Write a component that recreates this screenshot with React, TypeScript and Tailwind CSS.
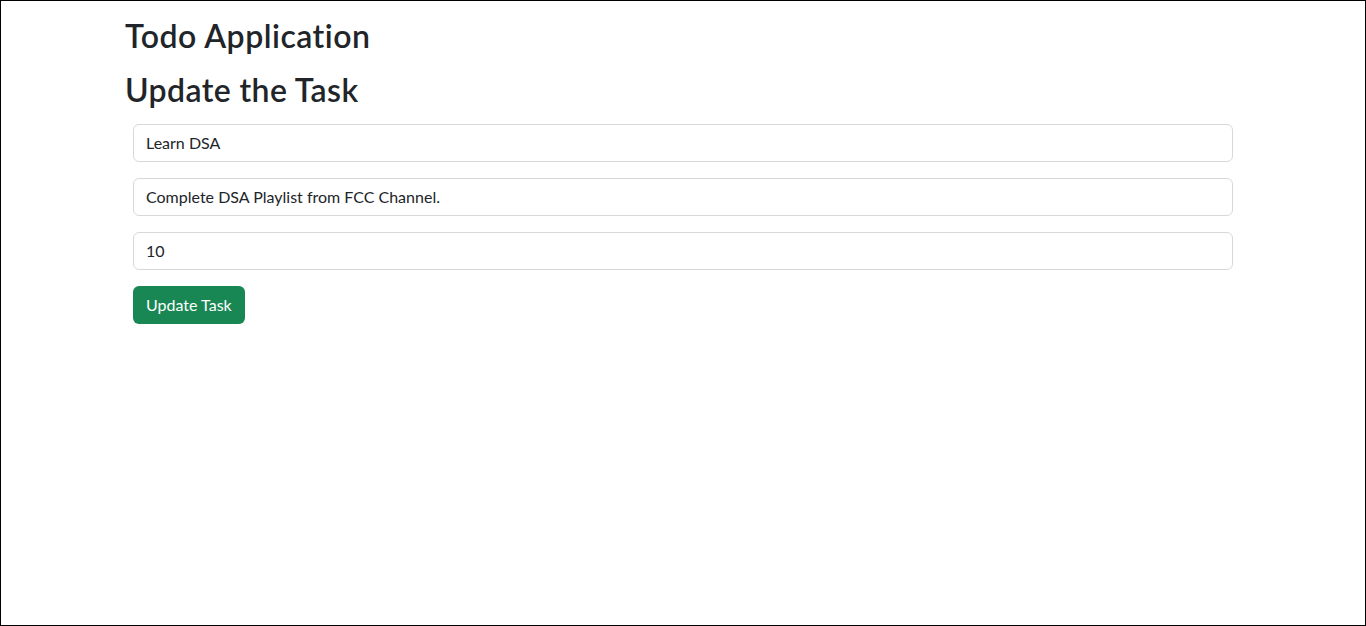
export default function App() {
  return (
    <div
      className="h-[626px] border border-black bg-white text-[#212529]"
      style={{ fontFamily: '"Segoe UI", Lato, "Noto Sans", sans-serif' }}
    >
      <div className="mx-auto w-[1140px] px-3">
        <h2 className="mt-4 mb-2 text-[32px] font-semibold leading-[38.4px] tracking-[0.5px]">Todo Application</h2>
        <h2 className="mt-4 mb-2 text-[32px] font-semibold leading-[38.4px] tracking-[0.4px]">Update the Task</h2>

        {/* Update form */}
        <form className="mx-2 mt-[14px]" onSubmit={(e) => e.preventDefault()}>
          <div className="mb-4">
            <input
              type="text"
              defaultValue="Learn DSA"
              className="block h-[38px] w-full rounded-md border border-[#d6d9dc] px-3 text-base text-[#212529] outline-none"
            />
          </div>
          <div className="mb-4">
            <input
              type="text"
              defaultValue="Complete DSA Playlist from FCC Channel."
              className="block h-[38px] w-full rounded-md border border-[#d6d9dc] px-3 text-base text-[#212529] outline-none"
            />
          </div>
          <div className="mb-4">
            <input
              type="number"
              defaultValue="10"
              className="block h-[38px] w-full rounded-md border border-[#d6d9dc] px-3 text-base text-[#212529] outline-none"
            />
          </div>
          <button
            type="submit"
            className="h-[38px] rounded-md bg-[#198754] px-[13px] text-base text-white"
          >
            Update Task
          </button>
        </form>
      </div>
    </div>
  );
}
